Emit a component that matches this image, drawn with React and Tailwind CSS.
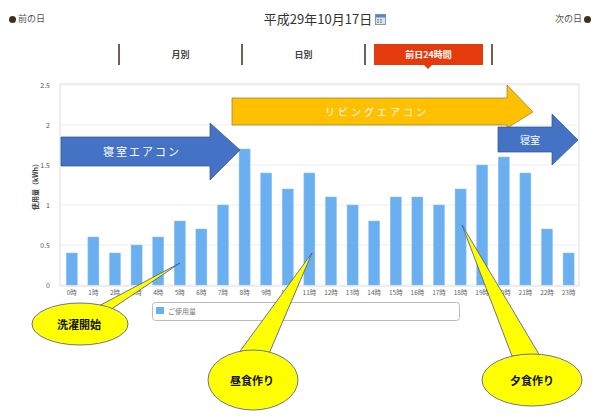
import React from "react";

const vals = [0.4,0.6,0.4,0.5,0.6,0.8,0.7,1.0,1.7,1.4,1.2,1.4,1.1,1.0,0.8,1.1,1.1,1.0,1.2,1.5,1.6,1.4,0.7,0.4];
const Y0 = 285, S = 80, X0 = 61, STEP = 21.6;

export default function App() {
  const font = { fontFamily: '"Noto Sans CJK JP","Noto Sans",sans-serif' };
  return (
    <div className="w-[600px] h-[418px] bg-white overflow-hidden relative" style={font}>
      <div className="h-[36px] flex items-center justify-between px-[9px] pt-[2px] text-[9px] text-[#555]">
        <div className="flex items-center gap-[2px]"><span className="w-[7px] h-[7px] rounded-full bg-[#3a3020]" />前の日</div>
        <div className="flex items-center gap-[3px] text-[13px] text-[#333] ml-[50px]">
          平成29年10月17日
          <svg width="11" height="12" viewBox="0 0 11 12"><rect x="0.5" y="1.5" width="10" height="10" fill="#dde4ee" stroke="#8a99b0"/><rect x="0.5" y="1.5" width="10" height="3" fill="#5b84c4"/><g fill="#8a99b0"><rect x="2" y="6" width="2" height="1.5"/><rect x="5" y="6" width="2" height="1.5"/><rect x="2" y="8.5" width="2" height="1.5"/><rect x="5" y="8.5" width="2" height="1.5"/></g></svg>
        </div>
        <div className="flex items-center gap-[2px]">次の日<span className="w-[7px] h-[7px] rounded-full bg-[#3a3020]" /></div>
      </div>
      <div className="h-[34px] flex items-start pl-[118px] pt-[8px] text-[9px] font-bold text-[#444]">
        <div className="w-[2px] h-[21px] bg-[#6b6352]" />
        <div className="w-[121px] h-[21px] flex items-center justify-center">月別</div>
        <div className="w-[2px] h-[21px] bg-[#6b6352]" />
        <div className="w-[121px] h-[21px] flex items-center justify-center">日別</div>
        <div className="w-[2px] h-[21px] bg-[#6b6352]" />
        <div className="w-[125px] h-[21px] flex items-center justify-center px-[6px]">
          <div className="relative w-[109px] h-[21px] bg-[#e53a0c] text-white flex items-center justify-center">
            前日24時間
            <div className="absolute left-[50px] -bottom-[4px] w-0 h-0 border-l-[4px] border-r-[4px] border-t-[4px] border-l-transparent border-r-transparent border-t-[#e53a0c]" />
          </div>
        </div>
        <div className="w-[2px] h-[21px] bg-[#6b6352]" />
      </div>
      <svg width="600" height="348" viewBox="0 70 600 348" className="block">
        <rect x="60" y="84" width="519" height="202" fill="none" stroke="#ddd" />
        {[0,0.5,1,1.5,2,2.5].map(v => (
          <g key={v}>
            <line x1="60" x2="579" y1={Y0 - v*S} y2={Y0 - v*S} stroke="#eee" />
            <text x="50" y={Y0 - v*S + 3} fontSize="7" fill="#555" textAnchor="end">{v}</text>
          </g>
        ))}
        <text transform="translate(38,185) rotate(-90)" fontSize="7" fontWeight="bold" fill="#444" textAnchor="middle">使用量（kWh）</text>
        {vals.map((v,i) => {
          const cx = X0 + STEP*i + STEP/2;
          return (
            <g key={i}>
              <rect x={cx-5.5} y={Y0 - v*S} width="11" height={v*S} fill="#6ab0f0" stroke="#8cc3f5" strokeWidth="0.5" />
              <text x={cx} y="295" fontSize="6.5" fill="#666" textAnchor="middle">{i}時</text>
            </g>
          );
        })}
        <rect x="152.5" y="302.5" width="307" height="18" rx="3" fill="#fff" stroke="#bbb" />
        <rect x="156" y="307" width="8" height="7" fill="#6ab0f0" />
        <text x="168" y="314" fontSize="7" fill="#777">ご使用量</text>

        <polygon points="61,137 210,137 210,123 240,150 210,180 210,166 61,166" fill="#4472c4" stroke="#2f528f" strokeWidth="0.7" />
        <text x="142" y="156" fontSize="11" fill="#fff" textAnchor="middle" letterSpacing="2">寝室エアコン</text>
        <polygon points="232,98 507,98 507,85 533,112 507,128 507,125 232,125" fill="#ffc000" stroke="#8a7a40" strokeWidth="0.7" />
        <text x="377" y="116" fontSize="10" fill="#fff" textAnchor="middle" letterSpacing="3">リビングエアコン</text>
        <polygon points="498,127 552,127 552,114 578,140 552,165 552,152 498,152" fill="#4472c4" stroke="#2f528f" strokeWidth="0.7" />
        <text x="530" y="144" fontSize="10" fill="#fff" textAnchor="middle">寝室</text>

        <g fill="#ffff00" stroke="#41529a" strokeWidth="0.8">
          <polygon points="180,263 95,308 110,310" />
          <ellipse cx="80" cy="324" rx="48" ry="21" />
          <polygon points="312,253 235,358 268,356" />
          <ellipse cx="253" cy="380" rx="45" ry="30" />
          <polygon points="462,225 512,356 540,356" />
          <ellipse cx="532" cy="380" rx="50" ry="26" />
        </g>
        <g fill="#ffff00">
          <ellipse cx="80" cy="324" rx="47" ry="20" />
          <ellipse cx="253" cy="380" rx="44" ry="29" />
          <ellipse cx="532" cy="380" rx="49" ry="25" />
        </g>
        <g fontSize="11" fontWeight="bold" fill="#111" textAnchor="middle" style={{fontFamily:'"Noto Sans CJK JP",serif'}}>
          <text x="79" y="329">洗濯開始</text>
          <text x="252" y="385">昼食作り</text>
          <text x="532" y="385">夕食作り</text>
        </g>
      </svg>
    </div>
  );
}
